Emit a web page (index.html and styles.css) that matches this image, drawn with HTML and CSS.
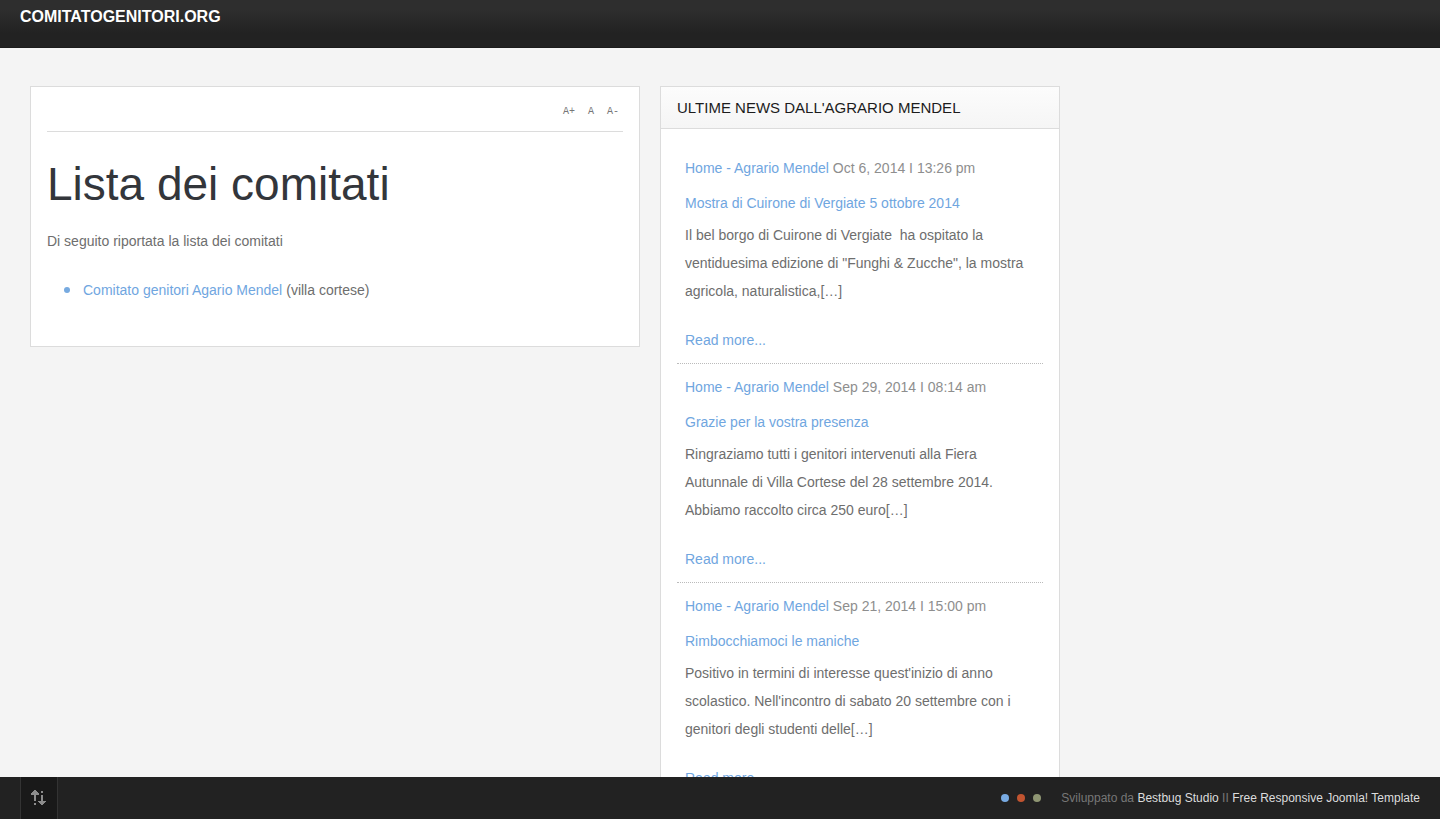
FILE: index.html
```html
<!DOCTYPE html>
<html lang="it">
<head>
<meta charset="utf-8">
<meta name="viewport" content="width=device-width, initial-scale=1">
<title>Comitatogenitori.org</title>
<link rel="stylesheet" href="styles.css">
</head>
<body>
<header class="site-header"><a class="site-name" href="#">COMITATOGENITORI.ORG</a></header>
<main class="layout">
  <article class="panel content">
    <div class="text-tools">
      <button type="button" aria-label="Ingrandisci testo">A+</button>
      <button type="button" aria-label="Testo normale">A</button>
      <button type="button" aria-label="Riduci testo">A-</button>
    </div>
    <h1 class="title">Lista dei comitati</h1>
    <p class="intro">Di seguito riportata la lista dei comitati</p>
    <ul class="committees">
      <li><a href="#">Comitato genitori Agario Mendel</a> (villa cortese)</li>
    </ul>
  </article>
  <aside class="panel news">
    <h2 class="news-heading">ULTIME NEWS DALL'AGRARIO MENDEL</h2>
    <div class="news-list">
      <section class="item">
        <p class="meta"><a href="#">Home - Agrario Mendel</a> Oct 6, 2014 I 13:26 pm</p>
        <h3 class="item-title"><a href="#">Mostra di Cuirone di Vergiate 5 ottobre 2014</a></h3>
        <p class="excerpt">Il bel borgo di Cuirone di Vergiate&nbsp; ha ospitato la ventiduesima edizione di "Funghi &amp; Zucche", la mostra agricola, naturalistica,[…]</p>
        <a class="more" href="#">Read more...</a>
      </section>
      <section class="item">
        <p class="meta"><a href="#">Home - Agrario Mendel</a> Sep 29, 2014 I 08:14 am</p>
        <h3 class="item-title"><a href="#">Grazie per la vostra presenza</a></h3>
        <p class="excerpt">Ringraziamo tutti i genitori intervenuti alla Fiera Autunnale di Villa Cortese del 28 settembre 2014. Abbiamo raccolto circa 250 euro[…]</p>
        <a class="more" href="#">Read more...</a>
      </section>
      <section class="item">
        <p class="meta"><a href="#">Home - Agrario Mendel</a> Sep 21, 2014 I 15:00 pm</p>
        <h3 class="item-title"><a href="#">Rimbocchiamoci le maniche</a></h3>
        <p class="excerpt">Positivo in termini di interesse quest'inizio di anno scolastico. Nell'incontro di sabato 20 settembre con i genitori degli studenti delle[…]</p>
        <a class="more" href="#">Read more...</a>
      </section>
    </div>
  </aside>
</main>
<footer class="bottom-bar">
  <button class="toggle" type="button" aria-label="Apri o chiudi il pannello">
    <svg width="16" height="16" viewBox="0 0 16 16" fill="#8c8c8c" aria-hidden="true">
      <path d="M3 0h2v1h1v1h1v1h1v2h-3v6h-2v-6h-3v-2h1v-1h1v-1h1zM3 13h2v2h-2zM10 1h2v2h-2zM10 5h2v6h3v1h-1v1h-1v1h-1v1h-2v-1h-1v-1h-1v-1h-1v-1h3z"/>
    </svg>
  </button>
  <div class="swatches">
    <button class="swatch blue" type="button" aria-label="Blu"></button>
    <button class="swatch red" type="button" aria-label="Rosso"></button>
    <button class="swatch green" type="button" aria-label="Verde"></button>
  </div>
  <p class="credits">Sviluppato da <a href="#">Bestbug Studio</a> II <a href="#">Free Responsive Joomla! Template</a></p>
</footer>
</body>
</html>
```

FILE: styles.css
```css
* { box-sizing: border-box; }
body {
  margin: 0;
  height: 100vh;
  overflow: hidden;
  display: flex;
  flex-direction: column;
  background: #f4f4f4;
  color: #6e6e6e;
  font: 14px/28px "Liberation Sans", Arial, sans-serif;
}
h1, h2, h3, p, ul { margin: 0; padding: 0; font-weight: normal; }
a { color: #70a6df; text-decoration: none; }
button { border: 0; padding: 0; background: none; font: inherit; cursor: pointer; }

.site-header {
  flex: none;
  height: 48px;
  padding: 3px 20px;
  background: linear-gradient(#2e2e2e 20%, #222 70%);
  border-bottom: 1px solid #1c1c1c;
}
.site-name { color: #fff; font-size: 16px; font-weight: bold; }

.layout {
  flex: 1;
  min-height: 0;
  overflow: hidden;
  display: grid;
  grid-template-columns: 610fr 400fr 330fr;
  gap: 20px;
  align-items: start;
  padding: 38px 30px 0;
}
.panel { background: #fff; border: 1px solid #dcdcdc; }

.content { padding: 16px 16px 42px; }
.text-tools {
  display: flex;
  justify-content: flex-end;
  gap: 13px;
  height: 29px;
  padding: 0 4px;
  border-bottom: 1px solid #dcdcdc;
}
.text-tools button {
  height: 17px;
  color: #777;
  font-family: "Liberation Mono", "Courier New", monospace;
  font-size: 10px;
  line-height: 17px;
}
.title { padding: 24px 0 15px; color: #33363b; font-size: 46px; line-height: 56px; }
.intro { margin-bottom: 21px; }
.committees { list-style: none; padding-left: 17px; }
.committees li { display: flex; align-items: center; gap: 4px; }
.committees li::before {
  content: "";
  width: 6px;
  height: 6px;
  margin-right: 9px;
  border-radius: 50%;
  background: #77aae0;
}

.news-heading {
  padding: 0 16px;
  color: #1c1c1c;
  font-size: 15px;
  line-height: 41px;
  background: linear-gradient(#fcfcfc, #f5f5f5);
  border-bottom: 1px solid #dcdcdc;
}
.news-list { padding: 16px; }
.item { padding: 9px 8px; border-bottom: 1px dotted #bbb; }
.meta { margin-bottom: 7px; color: #8e8e8e; }
.item-title { margin-bottom: 4px; font-size: 14px; }
.excerpt { margin-bottom: 21px; }
.more { display: block; }

.bottom-bar {
  flex: none;
  height: 42px;
  display: flex;
  align-items: center;
  padding: 0 20px;
  background: #222;
}
.toggle {
  width: 38px;
  height: 42px;
  display: flex;
  align-items: center;
  justify-content: center;
  background: #191919;
  border: solid #333;
  border-width: 0 1px;
}
.swatches { display: flex; gap: 8px; margin-left: auto; margin-right: 20px; }
.swatch { width: 8px; height: 8px; border-radius: 50%; }
.blue { background: #78aae2; }
.red { background: #c15430; }
.green { background: #8f9673; }
.credits { color: #777; font-size: 12px; }
.credits a { color: #ddd; }
```
